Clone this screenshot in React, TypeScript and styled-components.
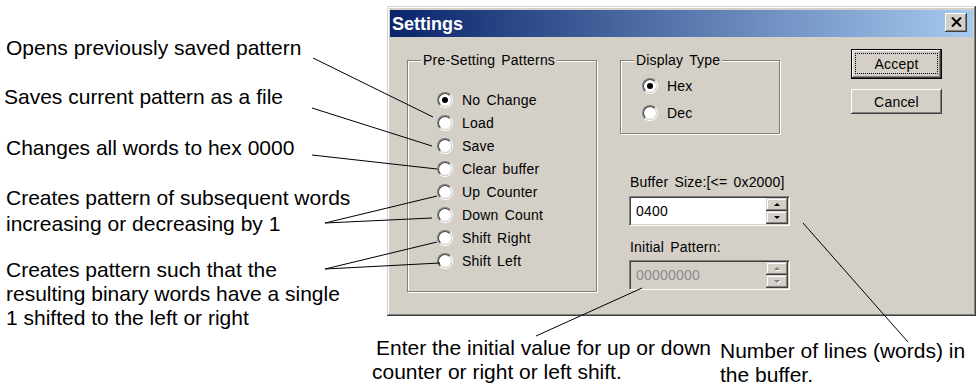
import React from "react";
import styled, { createGlobalStyle } from "styled-components";

const GlobalStyle = createGlobalStyle`
  html, body { margin: 0; padding: 0; background: #fff; }
  body { font-family: "Liberation Sans", Arial, sans-serif; color: #000; }
  * { box-sizing: border-box; }
`;

const Page = styled.div`
  position: relative;
  width: 980px;
  height: 389px;
  overflow: hidden;
  display: grid;
  grid-template-columns: 372px 608px;
`;

const Notes = styled.div`
  display: flex;
  flex-direction: column;
  padding-left: 6px;
`;

const Note = styled.p<{ $top: number; $shift?: number; $lh?: number }>`
  margin: ${(p) => p.$top}px 0 0 ${(p) => p.$shift ?? 0}px;
  font-size: 21px;
  line-height: ${(p) => p.$lh ?? 26}px;
  white-space: nowrap;
`;

const Stage = styled.div`
  display: flex;
  flex-direction: column;
`;

const Captions = styled.div`
  display: flex;
  margin-top: 20px;
`;

const Caption = styled.p<{ $width?: number; $top?: number; $indent?: number }>`
  margin: ${(p) => p.$top ?? 0}px 0 0 0;
  width: ${(p) => (p.$width ? `${p.$width}px` : "auto")};
  text-indent: ${(p) => p.$indent ?? 0}px;
  font-size: 21px;
  line-height: 24px;
  white-space: nowrap;
`;

const Dialog = styled.div`
  width: 589px;
  height: 310px;
  margin: 6px 0 0 15px;
  padding: 4px 3px 3px 3px;
  background: #d4d0c8;
  box-shadow: inset -1px -1px 0 #404040, inset 1px 1px 0 #d4d0c8,
    inset -2px -2px 0 #808080, inset 2px 2px 0 #fff;
  display: flex;
  flex-direction: column;
  font-family: Tahoma, "Liberation Sans", Arial, sans-serif;
  font-size: 14px;
  letter-spacing: 0.2px;
  word-spacing: 2px;
`;

const TitleBar = styled.div`
  height: 27px;
  flex: none;
  display: flex;
  align-items: center;
  justify-content: space-between;
  padding: 0 6px 0 2px;
  background: linear-gradient(to right, #0a246a, #a6caf0);
`;

const Title = styled.span`
  color: #fff;
  font-family: "Liberation Sans", Arial, sans-serif;
  font-weight: bold;
  font-size: 18px;
  letter-spacing: 0;
  line-height: 1;
`;

const bevel =
  "inset -1px -1px 0 #404040, inset 1px 1px 0 #fff, inset -2px -2px 0 #808080, inset 2px 2px 0 #d4d0c8";

const CloseButton = styled.span`
  width: 22px;
  height: 19px;
  margin-top: -3px;
  background: #d4d0c8;
  box-shadow: ${bevel};
  display: flex;
  align-items: center;
  justify-content: center;
`;

const Client = styled.div`
  display: flex;
  align-items: flex-start;
  padding-left: 17px;
`;

const GroupBox = styled.div<{ $w: number; $h: number; $pt: number; $pl: number }>`
  position: relative;
  width: ${(p) => p.$w}px;
  height: ${(p) => p.$h}px;
  margin-top: 23px;
  border: 1px solid #808080;
  box-shadow: inset 1px 1px 0 #fff, 1px 1px 0 #fff;
  padding: ${(p) => p.$pt}px 0 0 ${(p) => p.$pl}px;
  display: flex;
  flex-direction: column;
`;

const GroupLabel = styled.span`
  position: absolute;
  top: -9px;
  left: 13px;
  padding: 0 2px;
  background: #d4d0c8;
  line-height: 16px;
  white-space: nowrap;
`;

const RadioRow = styled.label<{ $h: number }>`
  height: ${(p) => p.$h}px;
  display: flex;
  align-items: center;
  gap: 9px;
  white-space: nowrap;
`;

const RadioOuter = styled.span`
  flex: none;
  width: 16px;
  height: 16px;
  border-radius: 50%;
  border: 1px solid;
  border-color: #808080 #fff #fff #808080;
  display: flex;
`;

const RadioInner = styled.span<{ $on: boolean }>`
  flex: 1;
  border-radius: 50%;
  border: 1px solid;
  border-color: #404040 #d4d0c8 #d4d0c8 #404040;
  background: #fff;
  display: flex;
  align-items: center;
  justify-content: center;
  &::after {
    content: "";
    width: 6px;
    height: 6px;
    border-radius: 50%;
    background: #000;
    display: ${(p) => (p.$on ? "block" : "none")};
  }
`;

const Middle = styled.div`
  width: 170px;
  margin-left: 23px;
  display: flex;
  flex-direction: column;
`;

const FieldArea = styled.div`
  display: flex;
  flex-direction: column;
  padding-left: 9px;
  margin-top: 40px;
`;

const FieldLabel = styled.span<{ $top?: number }>`
  margin-top: ${(p) => p.$top ?? 0}px;
  padding-left: 1px;
  line-height: 16px;
  white-space: nowrap;
`;

const SpinBox = styled.div<{ $disabled?: boolean; $top: number }>`
  width: 161px;
  height: 30px;
  margin-top: ${(p) => p.$top}px;
  display: flex;
  border: 1px solid;
  border-color: #808080 #fff #fff #808080;
  box-shadow: inset 1px 1px 0 #404040, inset -1px -1px 0 #d4d0c8;
  background: ${(p) => (p.$disabled ? "#d4d0c8" : "#fff")};
  padding: 1px;
`;

const SpinValue = styled.span<{ $disabled?: boolean }>`
  flex: 1;
  display: flex;
  align-items: center;
  padding-left: 5px;
  color: ${(p) => (p.$disabled ? "#8c8c8c" : "#000")};
`;

const SpinButtons = styled.span`
  width: 22px;
  display: flex;
  flex-direction: column;
`;

const SpinButton = styled.span`
  flex: 1;
  background: #d4d0c8;
  box-shadow: inset -1px -1px 0 #404040, inset 1px 1px 0 #d4d0c8,
    inset -2px -2px 0 #808080, inset 2px 2px 0 #fff;
  display: flex;
  align-items: center;
  justify-content: center;
`;

const Arrow = styled.span<{ $down?: boolean; $disabled?: boolean }>`
  width: 0;
  height: 0;
  border-left: 3px solid transparent;
  border-right: 3px solid transparent;
  ${(p) =>
    p.$down
      ? `border-top: 3px solid ${p.$disabled ? "#808080" : "#000"};`
      : `border-bottom: 3px solid ${p.$disabled ? "#808080" : "#000"};`}
  ${(p) => (p.$disabled ? "filter: drop-shadow(1px 1px 0 #fff);" : "")}
`;

const ButtonColumn = styled.div`
  margin: 12px 0 0 61px;
  display: flex;
  flex-direction: column;
  gap: 10px;
`;

const PushButton = styled.span<{ $default?: boolean }>`
  position: relative;
  width: 91px;
  height: ${(p) => (p.$default ? 30 : 25)}px;
  display: flex;
  align-items: center;
  justify-content: center;
  background: #d4d0c8;
  box-shadow: ${(p) =>
    p.$default
      ? "inset 0 0 0 1px #000, inset -2px -2px 0 #404040, inset 2px 2px 0 #fff, inset -3px -3px 0 #808080"
      : bevel};
  &::after {
    content: "";
    display: ${(p) => (p.$default ? "block" : "none")};
    position: absolute;
    inset: 4px 4px 5px 4px;
    border: 1px dotted #000;
  }
`;

const Leaders = styled.svg`
  position: absolute;
  left: 0;
  top: 0;
  width: 980px;
  height: 389px;
  pointer-events: none;
`;

const presets = [
  "No Change",
  "Load",
  "Save",
  "Clear buffer",
  "Up Counter",
  "Down Count",
  "Shift Right",
  "Shift Left",
];

const Radio = ({ label, on, h }: { label: string; on: boolean; h: number }) => (
  <RadioRow $h={h}>
    <RadioOuter>
      <RadioInner $on={on} />
    </RadioOuter>
    {label}
  </RadioRow>
);

const Spin = ({ value, disabled, top }: { value: string; disabled?: boolean; top: number }) => (
  <SpinBox $disabled={disabled} $top={top}>
    <SpinValue $disabled={disabled}>{value}</SpinValue>
    <SpinButtons>
      <SpinButton>
        <Arrow $disabled={disabled} />
      </SpinButton>
      <SpinButton>
        <Arrow $down $disabled={disabled} />
      </SpinButton>
    </SpinButtons>
  </SpinBox>
);

const lines: [number, number, number, number][] = [
  [313, 58, 433, 117],
  [312, 108, 432, 146],
  [312, 155, 437, 169],
  [325, 223, 437, 196],
  [325, 223, 432, 218],
  [325, 269, 437, 242],
  [325, 269, 440, 263],
  [536, 336, 642, 288],
  [803, 223, 908, 342],
];

export default function App() {
  return (
    <>
      <GlobalStyle />
      <Page>
        <Notes>
          <Note $top={35}>Opens previously saved pattern</Note>
          <Note $top={23} $shift={-2}>Saves current pattern as a file</Note>
          <Note $top={25}>Changes all words to hex 0000</Note>
          <Note $top={24}>
            Creates pattern of subsequent words
            <br />
            increasing or decreasing by 1
          </Note>
          <Note $top={21} $lh={24}>
            Creates pattern such that the
            <br />
            resulting binary words have a single
            <br />1 shifted to the left or right
          </Note>
        </Notes>
        <Stage>
          <Dialog>
            <TitleBar>
              <Title>Settings</Title>
              <CloseButton>
                <svg width="11" height="10" viewBox="0 0 11 10">
                  <path d="M1 0.5 L10 9.5 M10 0.5 L1 9.5" stroke="#000" strokeWidth="2" />
                </svg>
              </CloseButton>
            </TitleBar>
            <Client>
              <GroupBox $w={190} $h={232} $pt={27} $pl={29}>
                <GroupLabel>Pre-Setting Patterns</GroupLabel>
                {presets.map((p, i) => (
                  <Radio key={p} label={p} on={i === 0} h={23} />
                ))}
              </GroupBox>
              <Middle>
                <GroupBox $w={160} $h={74} $pt={11} $pl={21}>
                  <GroupLabel>Display Type</GroupLabel>
                  <Radio label="Hex" on h={27} />
                  <Radio label="Dec" on={false} h={27} />
                </GroupBox>
                <FieldArea>
                  <FieldLabel>Buffer Size:[&lt;= 0x2000]</FieldLabel>
                  <Spin value="0400" top={6} />
                  <FieldLabel $top={13}>Initial Pattern:</FieldLabel>
                  <Spin value="00000000" disabled top={5} />
                </FieldArea>
              </Middle>
              <ButtonColumn>
                <PushButton $default>Accept</PushButton>
                <PushButton>Cancel</PushButton>
              </ButtonColumn>
            </Client>
          </Dialog>
          <Captions>
            <Caption $width={348} $indent={4}>
              Enter the initial value for up or down
              <br />
              counter or right or left shift.
            </Caption>
            <Caption $top={3}>
              Number of lines (words) in
              <br />
              the buffer.
            </Caption>
          </Captions>
        </Stage>
        <Leaders viewBox="0 0 980 389">
          {lines.map(([x1, y1, x2, y2], i) => (
            <line key={i} x1={x1} y1={y1} x2={x2} y2={y2} stroke="#000" strokeWidth="1" />
          ))}
        </Leaders>
      </Page>
    </>
  );
}
